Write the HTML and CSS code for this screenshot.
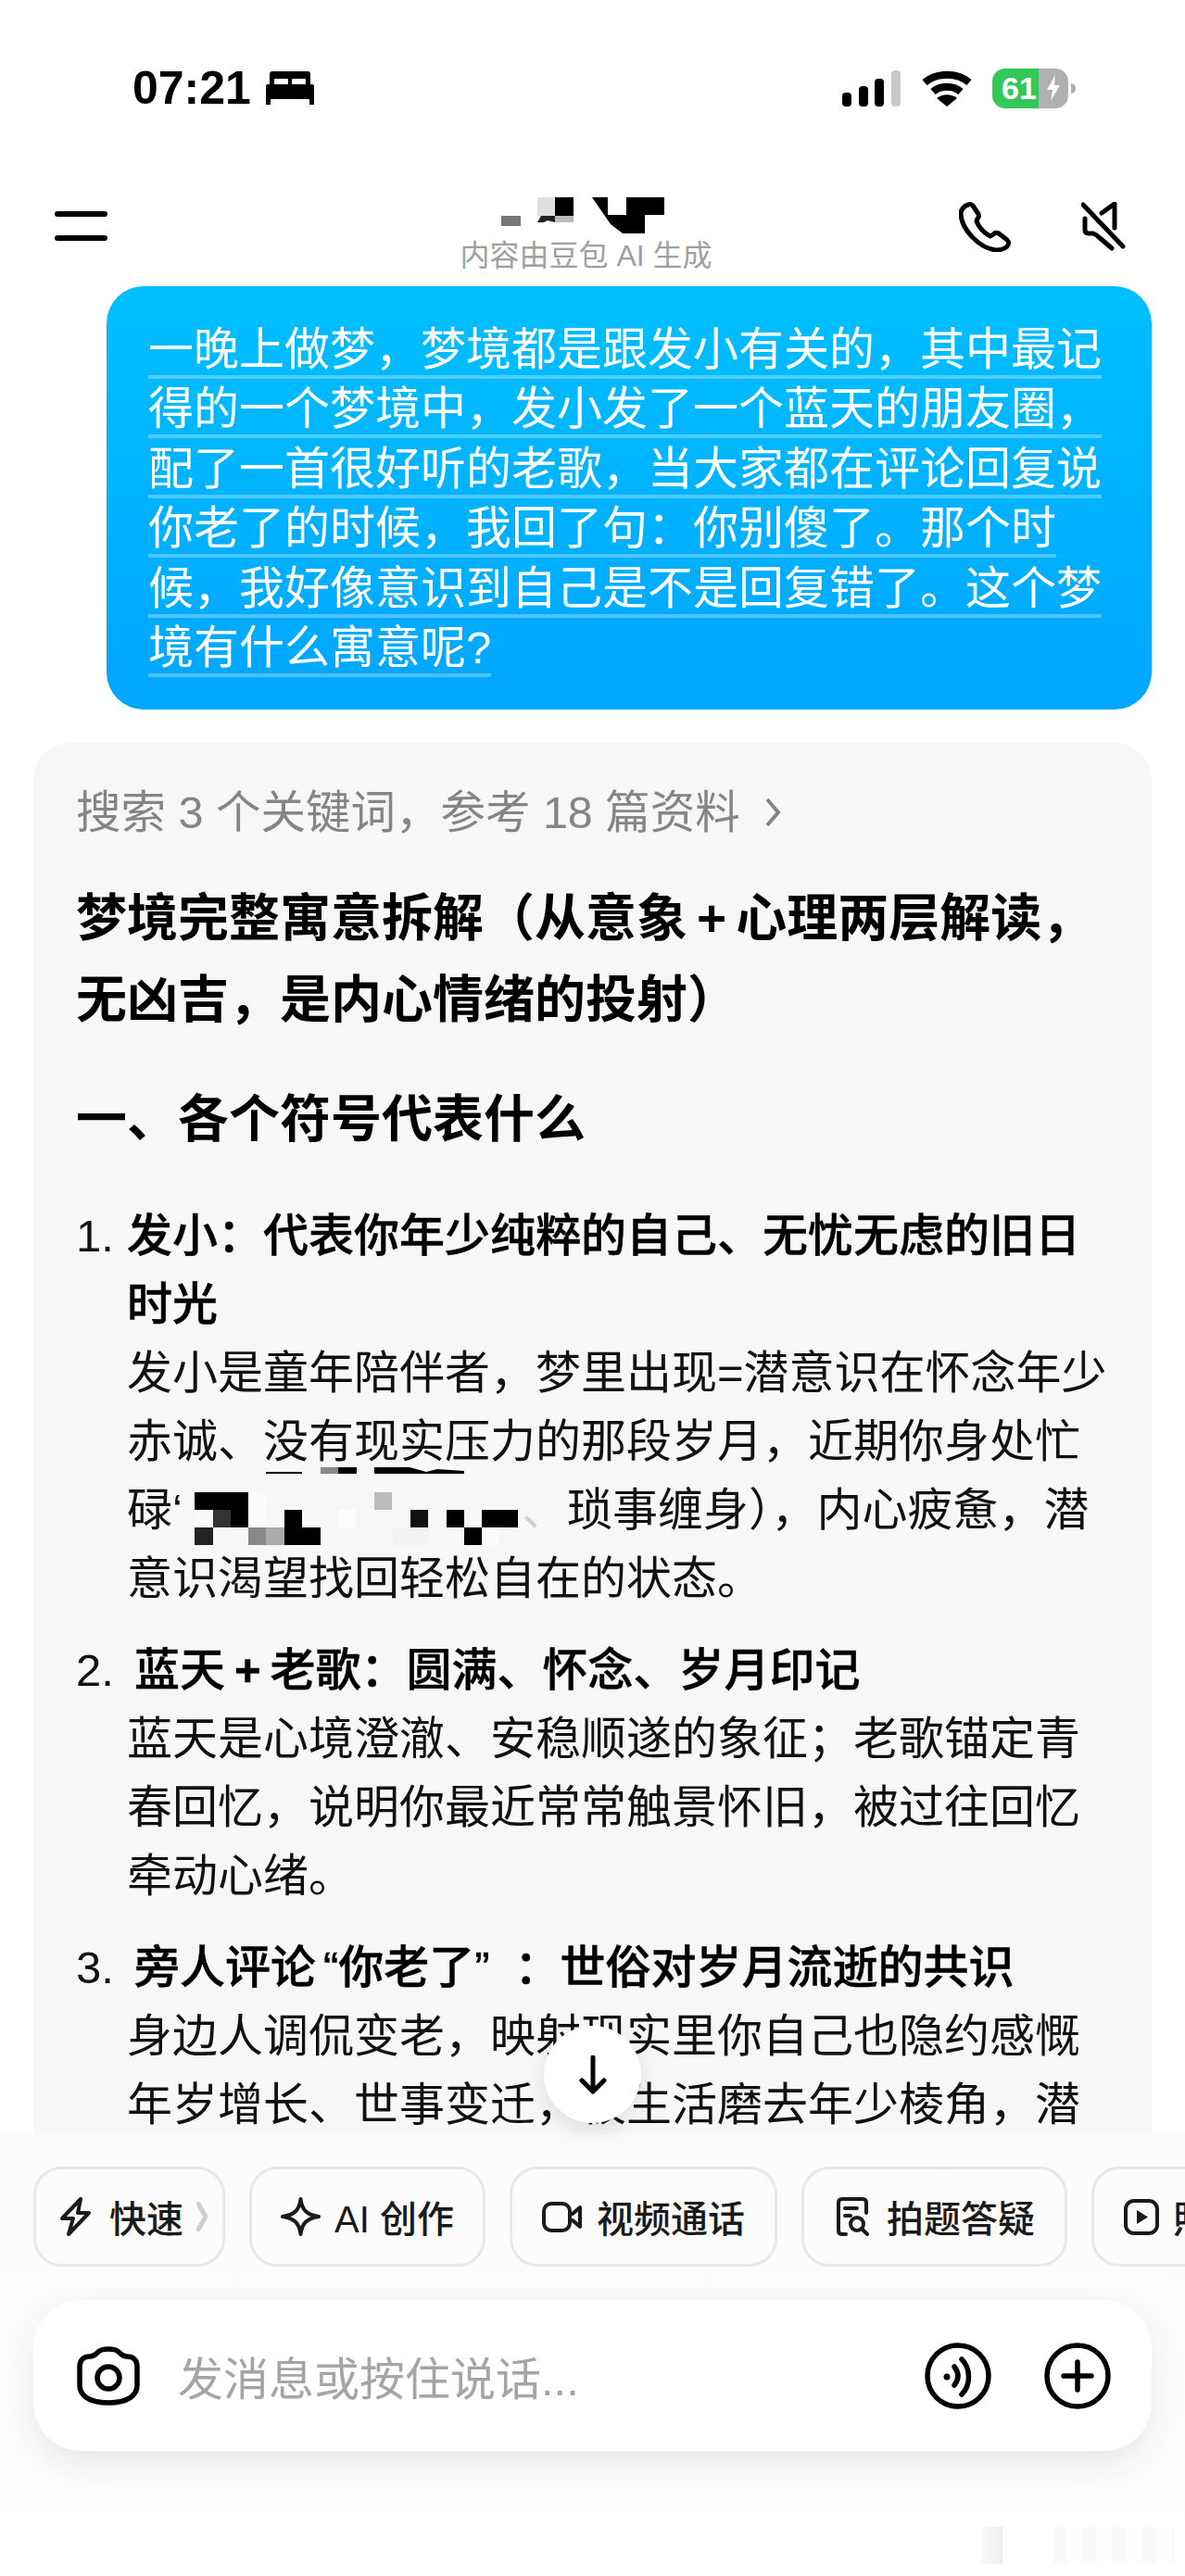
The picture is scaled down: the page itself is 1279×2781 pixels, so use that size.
FILE: index.html
```html
<!DOCTYPE html>
<html lang="zh-CN">

	<head>
		<meta charset="UTF-8">
		<title>豆包</title>
		<link rel="stylesheet" href="styles.css">
	</head>

	<body>
		<div id="phone">
			<!--状态栏-->
			<div class="status">
				<div class="status-left">
					<span class="time">07:21</span>
					<svg class="bed" viewBox="0 0 52 36">
						<path d="M7 0h38a3 3 0 0 1 3 3v12H4V3a3 3 0 0 1 3-3z" />
						<rect class="hole" x="9" y="8" width="15" height="7" rx="1" />
						<rect class="hole" x="28" y="8" width="15" height="7" rx="1" />
						<rect x="0" y="14" width="52" height="16" rx="2" />
						<rect x="0" y="28" width="5" height="8" />
						<rect x="47" y="28" width="5" height="8" />
					</svg>
				</div>
				<div class="status-right">
					<svg class="signal" viewBox="0 0 63 39">
						<rect x="0" y="24" width="10" height="15" rx="4" />
						<rect x="18" y="17" width="10" height="22" rx="4" />
						<rect x="35" y="9" width="10" height="30" rx="4" />
						<rect class="off" x="53" y="0" width="10" height="39" rx="4" />
					</svg>
					<svg class="wifi" viewBox="0 0 56 40">
						<path class="arc" d="M4 14C17 3 39 3 52 14" />
						<path class="arc" d="M13 24C21 17 35 17 43 24" />
						<path d="M28 40L17 31C23 26 33 26 39 31Z" />
					</svg>
					<div class="battery">
						<span class="battery-num">61</span>
						<svg class="bolt" viewBox="0 0 14 28">
							<path d="M9 0L0 16h6l-2 12 10-17H8z" />
						</svg>
					</div>
				</div>
			</div>

			<!--导航-->
			<div class="nav">
				<div class="menu"><span></span><span></span></div>
				<div class="title">
					<svg class="name" viewBox="0 0 176 39">
						<rect x="0" y="20" width="21" height="11" fill="#777" />
						<rect x="39" y="0" width="19" height="20" fill="#e0e0e0" />
						<rect x="58" y="0" width="20" height="20" fill="#000" />
						<path d="M39 27l4-7h15v7l-8-2-4 2z" fill="#222" />
						<rect x="58" y="20" width="20" height="7" fill="#bbb" />
						<path d="M98 0h78v19h-21v20h-24l-13-10z" fill="#000" />
						<rect x="115" y="0" width="20" height="19" fill="#fff" />
					</svg>
					<div class="subtitle">内容由豆包 AI 生成</div>
				</div>
				<div class="nav-icons">
					<svg class="phone-icon" viewBox="0 0 56 54">
						<path d="M10 3C12 2 14 3 15 4L21 13C22 15 21 17 20 18L19 21C22 28 28 34 34 37L37 35C39 33 41 33 43 34L52 41C54 43 54 46 52 48C49 51 45 52 40 52C22 50 3 30 2 13C2 8 6 4 10 3Z" />
					</svg>
					<svg class="mute-icon" viewBox="0 0 48 53">
						<path d="M2 3L45 48" />
						<path d="M22 12L36 2V28" />
						<path d="M4 18V30Q4 34 8 34H13Q16 35 19 38L33 50" />
					</svg>
				</div>
			</div>

			<!--聊天内容-->
			<div class="chat">
				<div class="bubble">
					<span>一晚上做梦，梦境都是跟发小有关的，其中最记得的一个梦境中，发小发了一个蓝天的朋友圈，配了一首很好听的老歌，当大家都在评论回复说你老了的时候，我回了句：你别傻了。那个时候，我好像意识到自己是不是回复错了。这个梦境有什么寓意呢?</span>
				</div>
				<div class="answer">
					<div class="search">搜索 3 个关键词，参考 18 篇资料 <svg class="chevron" viewBox="0 0 18 34"><path d="M3 3L15 17L3 31" /></svg></div>
					<h1>梦境完整寓意拆解（从意象<span class="plus">+</span>心理两层解读，无凶吉，是内心情绪的投射）</h1>
					<h2>一、各个符号代表什么</h2>
					<ol>
						<li>
							<span class="num">1.</span><b>发小：代表你年少纯粹的自己、无忧无虑的旧日时光</b><br>
							发小是童年陪伴者，梦里出现=潜意识在怀念年少赤诚、没有现实压力的那段岁月，近期你身处忙碌‘<svg class="mosaic" viewBox="0 0 366 74">
								<rect x="13" y="18" width="58" height="19" fill="#000" />
								<rect x="13" y="37" width="20" height="19" fill="#fafafa" />
								<rect x="33" y="37" width="19" height="19" fill="#333" />
								<rect x="52" y="37" width="19" height="19" fill="#000" />
								<rect x="71" y="18" width="19" height="38" fill="#fbfbfb" />
								<rect x="110" y="37" width="19" height="19" fill="#000" />
								<rect x="207" y="18" width="19" height="19" fill="#bbb" />
								<rect x="168" y="37" width="19" height="19" fill="#fdfdfd" />
								<rect x="246" y="37" width="19" height="19" fill="#111" />
								<rect x="285" y="37" width="19" height="19" fill="#000" />
								<rect x="323" y="37" width="39" height="19" fill="#000" />
								<rect x="13" y="56" width="20" height="19" fill="#222" />
								<rect x="71" y="56" width="19" height="19" fill="#888" />
								<rect x="90" y="56" width="20" height="19" fill="#aaa" />
								<rect x="110" y="56" width="39" height="19" fill="#000" />
								<rect x="227" y="56" width="39" height="19" fill="#f2f2f2" />
								<rect x="304" y="56" width="19" height="19" fill="#000" />
								<rect x="323" y="56" width="19" height="19" fill="#fcfcfc" />
								<rect x="90" y="-4" width="39" height="2" fill="#000" />
								<rect x="149" y="-9" width="19" height="7" fill="#888" />
								<rect x="168" y="-9" width="20" height="7" fill="#000" />
								<path d="M207-9h38l18 5 12-3 29 2v3h-97z" fill="#000" />
							</svg><span class="faded">、</span>琐事缠身），内心疲惫，潜意识渴望找回轻松自在的状态。
						</li>
						<li>
							<span class="num num-wide">2.</span><b>蓝天<span class="plus">+</span>老歌：圆满、怀念、岁月印记</b><br>
							蓝天是心境澄澈、安稳顺遂的象征；老歌锚定青春回忆，说明你最近常常触景怀旧，被过往回忆牵动心绪。
						</li>
						<li>
							<span class="num num-wide">3.</span><b>旁人评论<span class="quoted">“你老了”</span>：世俗对岁月流逝的共识</b><br>
							身边人调侃变老，映射现实里你自己也隐约感慨年岁增长、世事变迁，被生活磨去年少棱角，潜
						</li>
					</ol>
				</div>
			</div>

			<!--回到底部-->
			<div class="to-bottom">
				<svg viewBox="0 0 32 42">
					<path d="M16 2V39M4 27L16 39L28 27" />
				</svg>
			</div>

			<!--底部-->
			<div class="bottom">
				<div class="chips">
					<div class="chip chip-fast">
						<svg class="bolt-line" viewBox="0 0 33 42"><path d="M22 2L2 23H14L9 40L31 17H19Z" /></svg>
						<span>快速</span>
						<svg class="more" viewBox="0 0 12 32"><path d="M2 2L10 16L2 30" /></svg>
					</div>
					<div class="chip chip-star">
						<svg class="star" viewBox="0 0 43 42"><path d="M21.5 2C23 14 28 19 41 21C28 23 23 28 21.5 40C20 28 15 23 2 21C15 19 20 14 21.5 2Z" /></svg>
						<span>AI 创作</span>
					</div>
					<div class="chip">
						<svg class="video" viewBox="0 0 44 33"><rect x="2" y="2" width="28" height="29" rx="8" /><path d="M33 13L41 6V27L33 20" /></svg>
						<span>视频通话</span>
					</div>
					<div class="chip chip-ask">
						<svg class="doc" viewBox="0 0 35 42"><path d="M10 40H6Q2 40 2 36V6Q2 2 6 2H28Q32 2 32 6V17" /><path d="M9 12H22M9 20H15" /><circle cx="22" cy="29" r="7" /><path d="M27 34L33 40" /></svg>
						<span>拍题答疑</span>
					</div>
					<div class="chip">
						<svg class="play" viewBox="0 0 38 39"><rect x="2" y="2" width="34" height="35" rx="9" /><path class="solid" d="M14 12L26 19.500L14 27Z" /></svg>
						<span>照片解读</span>
					</div>
				</div>
				<div class="input">
					<svg class="camera" viewBox="0 0 70 64">
						<path d="M4 22C4 14 9 11 15 11C20 11 22 8 24 6C26 4 29 3 35 3C41 3 44 4 46 6C48 8 50 11 55 11C61 11 66 14 66 22V42C66 53 56 61 35 61C14 61 4 53 4 42Z" />
						<circle cx="35" cy="34" r="12" />
					</svg>
					<div class="placeholder">发消息或按住说话...</div>
					<svg class="round-icon" viewBox="0 0 72 72">
						<circle cx="36" cy="36" r="33" />
						<circle class="solid" cx="24" cy="37" r="3.500" />
						<path d="M32 26Q40 36 32 46" />
						<path d="M40 18C50 28 50 46 40 56" />
					</svg>
					<svg class="round-icon" viewBox="0 0 72 72">
						<circle cx="36" cy="36" r="33" />
						<path d="M21 36H51M36 21V51" />
					</svg>
				</div>
				<div class="watermark">
					<span class="mark-logo"></span>
					<span class="mark-text"></span>
				</div>
			</div>
		</div>
	</body>

</html>
```

FILE: styles.css
```css
* {
	margin: 0;
	padding: 0;
	box-sizing: border-box;
}

body {
	width: 1279px;
	height: 2781px;
	overflow: hidden;
	background-color: white;
	font-family: "Liberation Sans", "Noto Sans CJK SC", sans-serif;
	color: #111;
}

#phone {
	width: 1279px;
	height: 2781px;
	position: relative;
	overflow: hidden;
}

svg {
	display: block;
	flex-shrink: 0;
}

/* 状态栏 */
.status {
	height: 190px;
	padding: 0 126px 0 143px;
	display: flex;
	justify-content: space-between;
	align-items: center;
}

.status-left,
.status-right {
	display: flex;
	align-items: center;
}

.time {
	font-size: 50px;
	font-weight: bold;
	line-height: 60px;
	color: black;
}

.bed {
	width: 52px;
	height: 36px;
	margin-left: 16px;
}

.bed .hole {
	fill: white;
}

.signal {
	width: 63px;
	height: 39px;
	margin-right: 22px;
}

.signal .off {
	fill: #c9c9c9;
}

.wifi {
	width: 56px;
	height: 40px;
	margin-right: 21px;
}

.wifi .arc {
	fill: none;
	stroke: black;
	stroke-width: 8;
}

.battery {
	width: 82px;
	height: 43px;
	border-radius: 14px;
	background: linear-gradient(90deg, #34c759 50px, #b0b0b0 50px);
	position: relative;
	display: flex;
	align-items: center;
	padding-left: 10px;
}

.battery::after {
	content: "";
	position: absolute;
	left: 85px;
	top: 16px;
	width: 5px;
	height: 11px;
	border-radius: 0 5px 5px 0;
	background-color: #b0b0b0;
}

.battery-num {
	font-size: 34px;
	font-weight: bold;
	line-height: 43px;
	color: white;
}

.bolt {
	width: 14px;
	height: 28px;
	margin-left: 11px;
}

.bolt path {
	fill: white;
}

/* 导航 */
.nav {
	height: 119px;
	padding: 23px 64px 0 59px;
	display: grid;
	grid-template-columns: 1fr auto 1fr;
}

.menu span {
	display: block;
	width: 57px;
	height: 6px;
	margin-top: 15px;
	margin-bottom: 20px;
	border-radius: 3px;
	background-color: black;
}

.title {
	margin-right: 9px;
	display: flex;
	flex-direction: column;
	align-items: center;
}

.name {
	width: 176px;
	height: 39px;
	margin-right: 7px;
}

.subtitle {
	margin-top: 4px;
	font-size: 32px;
	line-height: 40px;
	white-space: nowrap;
	color: #a0a0a0;
}

.nav-icons {
	display: flex;
	justify-content: flex-end;
	align-items: flex-start;
	gap: 76px;
	padding-top: 5px;
}

.phone-icon {
	width: 56px;
	height: 54px;
}

.mute-icon {
	width: 48px;
	height: 53px;
}

.nav-icons path {
	fill: none;
	stroke: black;
	stroke-width: 5;
	stroke-linecap: round;
	stroke-linejoin: round;
}

/* 聊天内容 */
.chat {
	height: 1995px;
	padding: 0 36px;
	overflow: hidden;
}

.bubble {
	margin-left: 79px;
	height: 457px;
	padding: 36px 50px 0 45px;
	border-radius: 40px;
	background: linear-gradient(180deg, #00bfff, #00a6ff);
	font-size: 49px;
	line-height: 64.400px;
	color: white;
}

.bubble span {
	text-decoration: underline;
	text-decoration-color: rgba(255, 255, 255, 0.3);
	text-decoration-thickness: 4px;
	text-decoration-skip-ink: none;
	text-underline-offset: 11px;
}

.answer {
	margin-top: 36px;
	padding: 45px 36px 60px 46px;
	border-radius: 40px;
	background-color: #f7f7f7;
}

.search {
	display: flex;
	align-items: center;
	gap: 13px;
	font-size: 48.500px;
	line-height: 60px;
	white-space: pre;
	color: #858585;
}

.chevron {
	width: 18px;
	height: 34px;
}

.chevron path {
	fill: none;
	stroke: #858585;
	stroke-width: 4;
}

h1,
h2 {
	font-size: 55px;
	font-weight: bold;
	line-height: 88px;
	color: black;
}

h1 {
	margin-top: 40px;
}

h2 {
	margin-top: 41px;
}

.plus {
	padding: 0 10px;
	font-weight: bold;
}

ol {
	list-style: none;
	margin-top: 45px;
}

li {
	margin-bottom: 25px;
	padding-left: 55px;
	text-indent: -55px;
	font-size: 49px;
	line-height: 74px;
}

li b {
	font-weight: 500;
	-webkit-text-stroke: 0.5px black;
	color: black;
}

.quoted {
	padding: 0 27px 0 8px;
}

.num {
	margin-right: 14px;
}

.num-wide {
	margin-right: 22px;
}

.faded {
	color: #d0d0d0;
}

.mosaic {
	display: inline-block;
	width: 366px;
	height: 74px;
	vertical-align: top;
	overflow: visible;
}

/* 回到底部 */
.to-bottom {
	width: 105px;
	height: 105px;
	position: absolute;
	left: 587px;
	top: 2187px;
	border-radius: 50%;
	background-color: white;
	box-shadow: 0 8px 24px rgba(0, 0, 0, 0.1);
	display: flex;
	justify-content: center;
	align-items: center;
}

.to-bottom svg {
	width: 32px;
	height: 42px;
}

.to-bottom path {
	fill: none;
	stroke: black;
	stroke-width: 5;
	stroke-linecap: round;
	stroke-linejoin: round;
}

/* 底部 */
.bottom {
	height: 477px;
	padding-top: 35px;
	background: linear-gradient(180deg, #fbfbfb, #fdfdfd 60%, white);
}

.chips {
	display: flex;
	gap: 26px;
	padding-left: 36px;
	overflow: hidden;
}

.chip {
	flex-shrink: 0;
	height: 108px;
	padding: 0 32px;
	display: flex;
	align-items: center;
	gap: 15px;
	border: 3px solid #e8e8e8;
	border-radius: 30px;
	font-size: 40px;
	font-weight: 500;
	white-space: nowrap;
	color: #1a1a1a;
}

.chip-fast {
	padding: 0 16px 0 26px;
	gap: 20px;
}

.chip-star {
	padding: 0 31px;
}

.chip-ask {
	padding: 0 32px 0 35px;
	gap: 19px;
}

.chip svg path,
.chip svg rect,
.chip svg circle {
	fill: none;
	stroke: #1a1a1a;
	stroke-width: 4;
	stroke-linecap: round;
	stroke-linejoin: round;
}

.chip svg .solid {
	fill: #1a1a1a;
	stroke: none;
}

.bolt-line {
	width: 33px;
	height: 42px;
}

.chip svg.more {
	width: 12px;
	height: 32px;
	margin-left: -6px;
}

.chip svg.more path {
	stroke: #cfcfcf;
	stroke-width: 5;
}

.star {
	width: 43px;
	height: 42px;
}

.video {
	width: 44px;
	height: 33px;
}

.doc {
	width: 35px;
	height: 42px;
}

.play {
	width: 38px;
	height: 39px;
}

.input {
	height: 163px;
	margin: 36px 36px 0;
	padding: 0 44px 0 46px;
	display: flex;
	align-items: center;
	gap: 57px;
	border-radius: 52px;
	background-color: white;
	box-shadow: 0 16px 40px rgba(0, 0, 0, 0.09);
}

.input svg path,
.input svg circle {
	fill: none;
	stroke: black;
	stroke-width: 5.500;
	stroke-linecap: round;
	stroke-linejoin: round;
}

.input svg .solid {
	fill: black;
	stroke: none;
}

.camera {
	width: 70px;
	height: 64px;
	margin-right: -17px;
}

.placeholder {
	flex: 1;
	font-size: 49px;
	color: #a5a5a5;
}

.round-icon {
	width: 72px;
	height: 72px;
}

.watermark {
	margin-top: 82px;
	padding-right: 12px;
	display: flex;
	justify-content: flex-end;
	height: 40px;
}

.mark-logo {
	width: 34px;
	height: 40px;
	margin-right: 44px;
	border-right: 11px solid white;
	background: linear-gradient(90deg, #fafafa, #eeeeee);
}

.mark-text {
	width: 130px;
	height: 40px;
	background: repeating-linear-gradient(90deg, #fafafa 0, #fafafa 14px, #fefefe 14px, #fefefe 32px);
}
```
